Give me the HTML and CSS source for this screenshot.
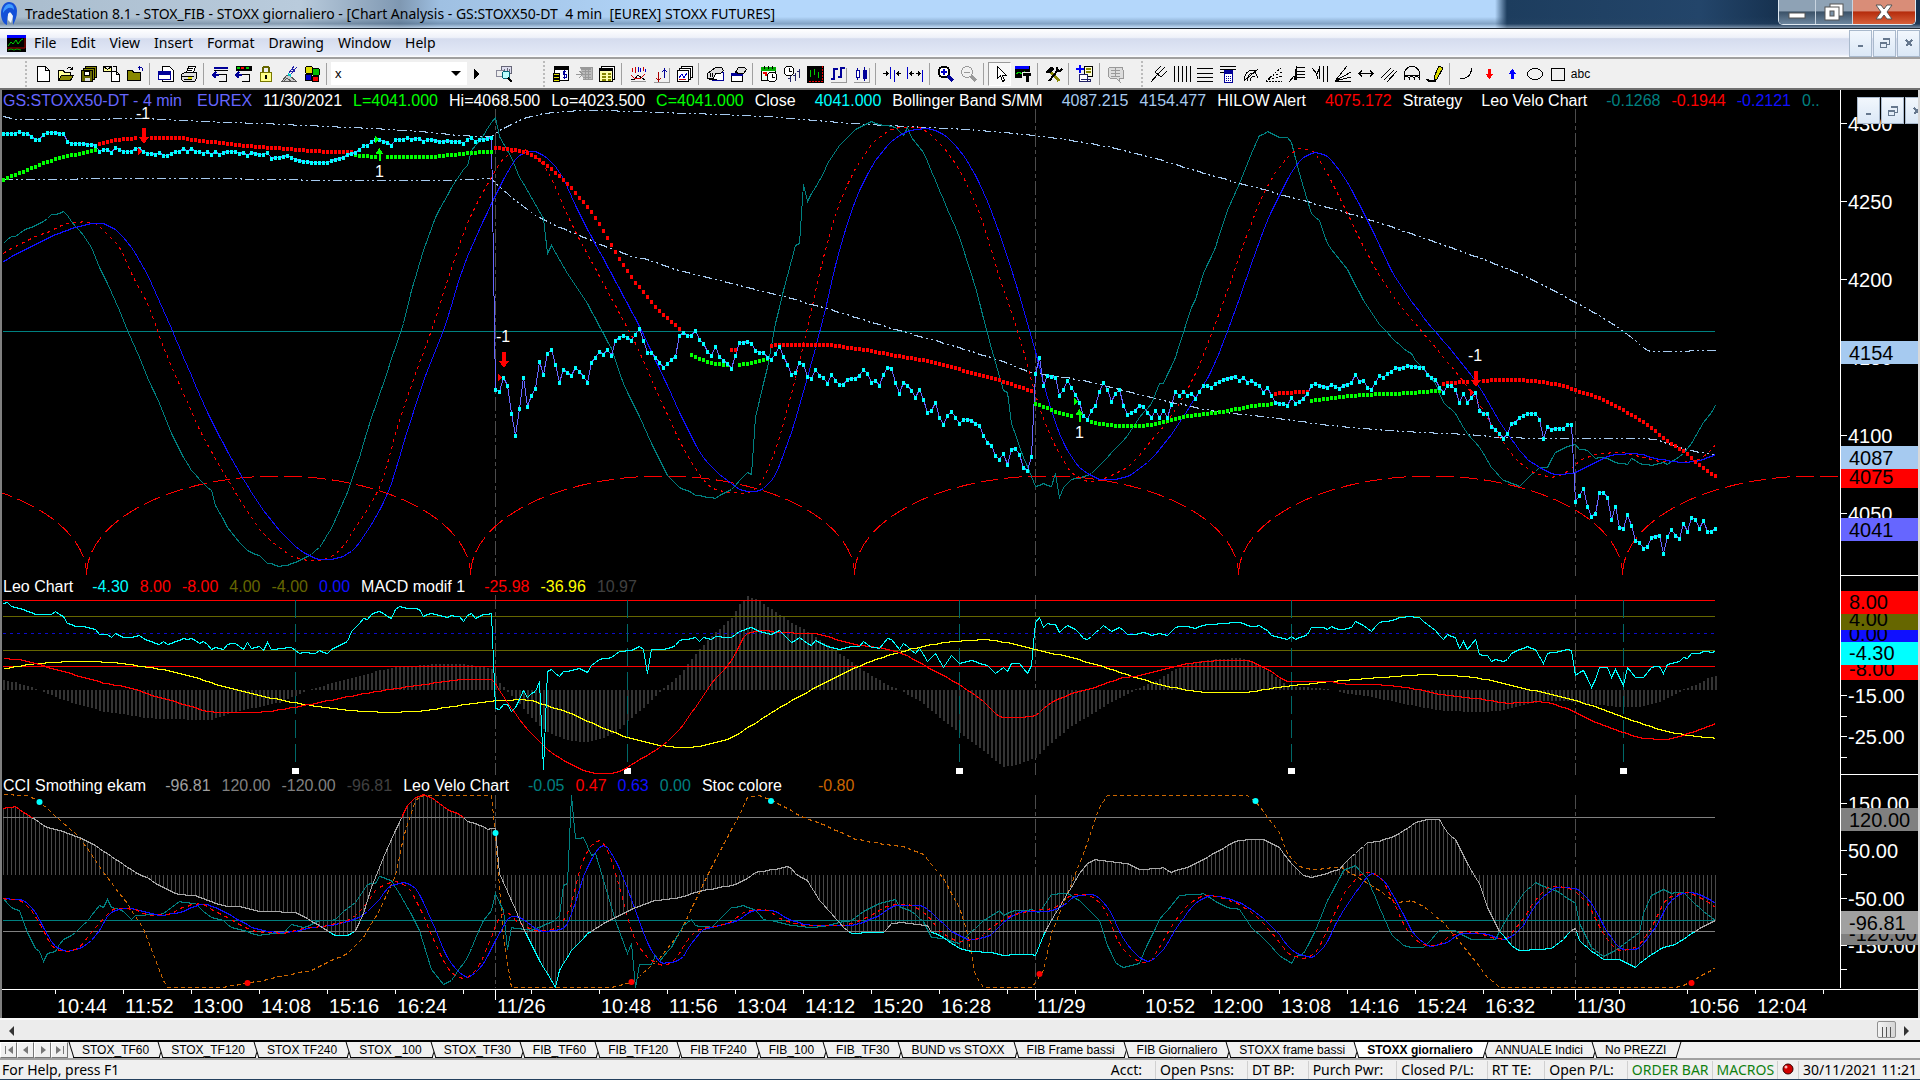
FILE: index.html
```
<!DOCTYPE html>
<html lang="en">
<head>
    <meta charset="utf-8">
    <title>TradeStation 8.1 - STOX_FIB - STOXX giornaliero</title>
    <link rel="stylesheet" href="styles.css">
</head>
<body>
<header class="titlebar">
    <svg class="logo" viewBox="0 0 18 26"><path d="M1 13C1 6 4 1 9 1c5 0 8 4 8 9 0 6-2 10-4 14 0-6 0-12-3-12-2 0-3 3-3 12C4 23 1 19 1 13z" fill="#1450d8"/><path d="M3 12C3 7 6 3 9 3c4 0 5 3 5 6-3-4-8-2-11 3z" fill="#3f9bff"/><path d="M8 13l2-2 3 4-2 7-3-3z" fill="#eef4ff"/></svg>
    <h1>TradeStation 8.1 - STOX_FIB - STOXX giornaliero - [Chart Analysis - GS:STOXX50-DT&nbsp; 4 min&nbsp; [EUREX] STOXX FUTURES]</h1>
    <div class="win-buttons">
        <button type="button" class="win-min" aria-label="Minimize"><svg width="20" height="16"><rect x="2" y="9" width="16" height="5" fill="#fff" stroke="#555"/></svg></button>
        <button type="button" class="win-max" aria-label="Restore"><svg width="22" height="18" fill="#fff" stroke="#555"><rect x="7" y="1" width="13" height="12"/><rect x="2" y="4" width="14" height="13"/><rect x="7" y="8" width="4" height="5" fill="#7c93a8"/></svg></button>
        <button type="button" class="win-close" aria-label="Close"><svg width="22" height="18"><path d="M3 2h5l3 4 3-4h5l-5 7 5 7h-5l-3-4-3 4H3l5-7z" fill="#fff" stroke="#555"/></svg></button>
    </div>
</header>

<nav class="menubar">
    <svg class="doc-icon" width="19" height="17"><path d="M0 0h19v17H0z" fill="#000"/><path d="M0 1.500h19" stroke="#00f" stroke-width="3"/><path d="M1 11l3-4 2 2 3-4 2 4 3-4 2-1" stroke="#0c0" fill="none"/><path d="M18 3v10H0" stroke="#a00" fill="none"/><path d="M1 15l3-1 3 1 3-1 4 1" stroke="#0a0" fill="none"/></svg>
    <button type="button">File</button>
    <button type="button">Edit</button>
    <button type="button">View</button>
    <button type="button">Insert</button>
    <button type="button">Format</button>
    <button type="button">Drawing</button>
    <button type="button">Window</button>
    <button type="button">Help</button>
    <div class="mdi">
        <button type="button" aria-label="Minimize chart"><svg width="14" height="14"><path d="M4 10h5" stroke-width="2"/></svg></button>
        <button type="button" aria-label="Restore chart"><svg width="14" height="14"><path d="M5 4V2h6v6H9M5 3h6M2 6h6v5H2zM2 7h6"/></svg></button>
        <button type="button" aria-label="Close chart"><svg width="14" height="14"><path d="M4 4l6 6M10 4l-6 6" stroke-width="2"/></svg></button>
    </div>
</nav>

<div class="toolbar">
    <i class="grip"></i>
    <button type="button" aria-label="New"><svg viewBox="0 0 18 18"><path d="M3.500 1.500h8l4 4v11h-12zM11.500 1.500v4h4" fill="#fff"/></svg></button>
    <button type="button" aria-label="Open"><svg viewBox="0 0 18 18"><path d="M1.500 15.500v-10h5l1 2h6v3" fill="#ff9"/><path d="M1.500 15.500l3-5h12l-3 5z" fill="#880"/><path d="M9.500 4.500c2-3 4-3 6 0M15.500 1.500v3h-3"/></svg></button>
    <button type="button" aria-label="Save all"><svg viewBox="0 0 18 18"><path d="M5.500 1.500h11v11h-11z" fill="#880"/><path d="M3.500 3.500h11v11h-11z" fill="#880"/><path d="M1.500 5.500h11v11h-11z" fill="#660"/><path d="M4.500 6.500h5v4h-5z" fill="#fff"/><path d="M5 13h5v3H5z" fill="#ddd" stroke="none"/></svg></button>
    <button type="button" aria-label="Page from template"><svg viewBox="0 0 18 18"><path d="M.500 1.500h8v5h-8zM.500 1.500l4 3 4-3" fill="#ff9"/><path d="M8.500 6.500h5l3 3v7h-8zM13.500 6.500v3h3" fill="#fff"/><path d="M10 1.500h3v4"/></svg></button>
    <button type="button" aria-label="Close folder"><svg viewBox="0 0 18 18"><path d="M1.500 15.500v-10h5l1 2h7v8z" fill="#880"/><path d="M17 6c0-3-1-4-4-4M13 .500v4M12 2h4" stroke="#009"/></svg></button>
    <i class="sep"></i>
    <button type="button" aria-label="Page setup"><svg viewBox="0 0 18 18"><path d="M5.500 1.500h7l4 4v11h-11z" fill="#fff"/><path d="M1.500 6.500h12v8h-12z" fill="#fff" stroke="#009"/><path d="M1 8h13" stroke="#009" stroke-width="3"/></svg></button>
    <button type="button" aria-label="Print"><svg viewBox="0 0 18 18"><path d="M6.500 7.500l2-6h7l-2 6" fill="#fff"/><path d="M8 3.500h5M7 5.500h5"/><path d="M1.500 9.500l3-2h12v6l-2 3h-11l-2-2z" fill="#ddd"/><path d="M1 11.500h13M4 14.500h8"/><path d="M8 13h4" stroke="#dd0" stroke-width="2"/></svg></button>
    <i class="sep"></i>
    <button type="button" aria-label="Insert window"><svg viewBox="0 0 18 18"><path d="M3 2.500h14" stroke="#009" stroke-width="2"/><path d="M3 5.500h14M7.500 9.500h8v7h-8" /><path d="M1 10h7M5 7l-3 3 3 3" stroke="#009" stroke-width="2"/></svg></button>
    <button type="button" aria-label="Insert bar"><svg viewBox="0 0 18 18"><path d="M2 1h15v4H2z" fill="#000"/><path d="M3 3h3" stroke="#0c0" stroke-width="2"/><path d="M7 3h3" stroke="#f00" stroke-width="2"/><path d="M12 3h3" stroke="#0c0" stroke-width="2"/><path d="M7.500 9.500h8v7h-8"/><path d="M1 10h7M5 7l-3 3 3 3" stroke="#009" stroke-width="2"/></svg></button>
    <button type="button" aria-label="Lock"><svg viewBox="0 0 18 18"><path d="M6 9V4c0-3 6-3 6 0v5" stroke="#660" stroke-width="2"/><path d="M3.500 7.500h11v9h-11z" fill="#ff8" stroke="#770"/><path d="M9 10v4" stroke-width="2"/></svg></button>
    <button type="button" aria-label="Satellite"><svg viewBox="0 0 18 18"><path d="M2 16l5-6 3 1 6 5zM4 16l3-3 4 3" fill="#ccc" stroke="#555"/><path d="M8 9l3 2" stroke="#0cc" stroke-width="2"/><path d="M9 8l5-7M11 9l6-7M12 4l3 1M11 6l4 1" stroke="#22a"/></svg></button>
    <button type="button" aria-label="Blocks"><svg viewBox="0 0 18 18"><circle cx="6" cy="5" r="4" fill="#dd0"/><circle cx="13" cy="7" r="4" fill="#0b0"/><path d="M2.500 9.500h6v6h-6z" fill="#00c"/><path d="M9.500 11.500h6v5h-6z" fill="#e00"/></svg></button>
    <i class="sep"></i>
    <label class="symbol"><select aria-label="Symbol"><option>x</option></select></label>
    <button type="button" class="go" aria-label="Go"><svg viewBox="0 0 18 18"><path d="M7 4l5 5-5 5z" fill="#000"/></svg></button>
    <button type="button" class="lookup" aria-label="Symbol lookup"><svg viewBox="0 0 18 18"><path d="M6.500 1.500h10v7h-10z" fill="#dde" stroke="#667"/><path d="M1.500 5.500h7v6h-7z" fill="#eee" stroke="#889"/><path d="M9 4v4M12 3v5M14 4v4" stroke="#667"/><circle cx="11" cy="10" r="4" fill="#bff" stroke="#067"/><path d="M13 13l4 4" stroke-width="2"/></svg></button>
    <i class="grip"></i>
    <button type="button" aria-label="Order bar"><svg viewBox="0 0 18 18"><path d="M2.500 1.500h14v14h-14z" fill="#fff"/><path d="M2 3h15" stroke-width="3"/><path d="M1.500 8.500h6v2h-6zM1.500 11.500h6v2h-6zM1.500 14.500h6v2h-6z" fill="#dd0"/><path d="M14 6h-3v3h3v3h-3M12.500 5v9" stroke="#009"/></svg></button>
    <button type="button" disabled aria-label="Position list"><svg viewBox="0 0 18 18" class="dim"><path d="M5 2h12v12H8" fill="#bbb"/><path d="M1 9h7M4 6l4 3-4 4M7 6h9M8 9h8M8 12h8M10 5v9M13 5v9"/><path d="M6 3h10" stroke-width="3"/></svg></button>
    <button type="button" aria-label="Table"><svg viewBox="0 0 18 18"><path d="M3.500 1.500h13v13h-13z" fill="#fff"/><path d="M1.500 3.500h13v13h-13z" fill="#ffa"/><path d="M1 4.500h14" stroke-width="2"/><path d="M4 8.500h4M10 8.500h3M4 11.500h4M10 11.500h3M4 14.500h4M10 14.500h3" stroke="#880" stroke-width="2"/></svg></button>
    <i class="sep"></i>
    <button type="button" aria-label="Indicator"><svg viewBox="0 0 18 18"><path d="M3 3v4M6 2v6M14 2v4" stroke="#c00"/><path d="M9 2v5M11 3v4M16 4v3" stroke="#00c"/><path d="M2 15l4-1 3-4 4 3 3 2"/><path d="M2 10l3 3 4 1 3-1 4-4" stroke="#c00"/><path d="M17 16H2" stroke="#999"/></svg></button>
    <button type="button" aria-label="Signals"><svg viewBox="0 0 18 18"><path d="M6.500 7v9M4.500 13l2 3 2-3" stroke="#a00"/><path d="M12.500 13V4M10.500 7l2-3 2 3" stroke="#009"/><path d="M17.500 3v14H2" stroke="#999"/></svg></button>
    <button type="button" aria-label="Chart stack"><svg viewBox="0 0 18 18"><path d="M6.500 1.500h11v11h-11z" fill="#fff"/><path d="M4.500 3.500h11v11h-11z" fill="#fff"/><path d="M2.500 5.500h11v11h-11z" fill="#fff"/><path d="M4 13l3-4 2 4 3-5" stroke="#00c"/><path d="M4 15l4-1 3 1" stroke="#c00"/></svg></button>
    <i class="sep"></i>
    <button type="button" aria-label="Format object"><svg viewBox="0 0 18 18"><path d="M6.500 7.500h11v8h-11z" fill="#fff" stroke="#009"/><path d="M1.500 8.500l8-6h6l2 3-3 3h-5l-2 5h-6z" fill="#ddd"/><path d="M4 8v4M6 8v4M3 14h8"/></svg></button>
    <button type="button" aria-label="Format window"><svg viewBox="0 0 18 18"><path d="M2.500 8.500h11v8h-11z" fill="#fff"/><path d="M2 9.500h12" stroke="#009" stroke-width="3"/><path d="M6.500 7.500l3-5h6l2 2-3 4h-4z" fill="#ddd"/></svg></button>
    <i class="sep"></i>
    <button type="button" aria-label="Session"><svg viewBox="0 0 18 18"><path d="M1.500 3.500h14v12h-14z" fill="#efe"/><path d="M1 4h15" stroke="#0a0" stroke-width="4"/><path d="M4 1v3M8 1v3M12 1v3"/><circle cx="12" cy="12" r="5" fill="#fff"/><path d="M12 9v3h3"/><path d="M3 8h3v3" stroke="#e00" stroke-width="2"/></svg></button>
    <button type="button" aria-label="Interval"><svg viewBox="0 0 18 18"><circle cx="6" cy="6" r="5" fill="#fff"/><path d="M6 3v3h3"/><path d="M7.500 11v6M12.500 8v8M16.500 4v9M5 13h3M10 10h3M14 6h3" stroke="#226"/></svg></button>
    <button type="button" aria-label="Chart colors"><svg viewBox="0 0 18 18"><path d="M1 1h16v16H1z" fill="#000"/><path d="M4.500 5v7M8.500 4v6M12.500 7v6" stroke="#0c0"/><path d="M3 16.500h14M16.500 1v15" stroke="#e00" stroke-dasharray="2 1"/></svg></button>
    <button type="button" aria-label="Bar style"><svg viewBox="0 0 18 18"><path d="M5 3v12M12 2v11" stroke="#009" stroke-width="2"/><path d="M2 14h3M5 4h4M9 12h3M12 3h4" stroke="#009" stroke-width="2"/><path d="M17.500 3v14H2" stroke="#999"/></svg></button>
    <button type="button" aria-label="Candle style"><svg viewBox="0 0 18 18"><path d="M5.500 3v12M12.500 2v14" stroke="#009"/><path d="M4 5h3v7H4z" fill="#fff" stroke="#009"/><path d="M11 5h3v8h-3z" fill="#009" stroke="#009"/><path d="M17.500 3v14H2" stroke="#999"/></svg></button>
    <i class="sep"></i>
    <button type="button" aria-label="Decrease spacing"><svg viewBox="0 0 18 18"><path d="M7.500 2v12M11.500 5v12" stroke="#00c"/><path d="M0 8.500h5M3 6.500l2 2-2 2M18 8.500h-4M16 6.500l-2 2 2 2"/></svg></button>
    <button type="button" aria-label="Increase spacing"><svg viewBox="0 0 18 18"><path d="M1.500 2v12M16.500 5v12" stroke="#00c"/><path d="M4 8.500h4M6 6.500l-2 2 2 2M14 8.500h-4M12 6.500l2 2-2 2"/></svg></button>
    <i class="sep"></i>
    <button type="button" aria-label="Zoom in"><svg viewBox="0 0 18 18"><circle cx="7" cy="7" r="5.500" fill="#fff" stroke-width="2"/><path d="M4 7h6M7 4v6" stroke="#00c" stroke-width="2"/><path d="M11 11l5 5" stroke="#009" stroke-width="3"/></svg></button>
    <button type="button" disabled aria-label="Zoom out"><svg viewBox="0 0 18 18" class="dim"><circle cx="7" cy="7" r="5.500"/><path d="M4 7h6"/><path d="M11 11l5 5" stroke-width="3"/></svg></button>
    <i class="sep"></i>
    <button type="button" class="pressed" aria-label="Pointer"><svg viewBox="0 0 18 18"><path d="M6.500 1.500v12l3-3 2 6 2-1-2-5h4z" fill="#fff"/></svg></button>
    <button type="button" aria-label="Tracking tip"><svg viewBox="0 0 18 18"><path d="M1 1h14v11H1z" fill="#000"/><path d="M1 2h14" stroke="#00f" stroke-width="3"/><path d="M2 9l3-2 3 2 3-3" stroke="#0c0"/><path d="M8 7h10v11H8z" fill="#f0f0f0" stroke="none"/><path d="M9 9.500h8M13 9v8" stroke-width="3"/></svg></button>
    <i class="sep"></i>
    <button type="button" aria-label="Customize"><svg viewBox="0 0 18 18"><path d="M4 5l10 11" stroke="#880" stroke-width="3"/><path d="M13 5L4 16" stroke-width="2"/><path d="M1 7l5-5 3 2-4 4z" fill="#000"/><path d="M12 2v3l3 1 2-2" stroke-width="2"/></svg></button>
    <i class="sep"></i>
    <button type="button" aria-label="Add window"><svg viewBox="0 0 18 18"><path d="M8.500 1.500h8v10h-8z" fill="#ffd"/><path d="M10 4h5M10 7h5" stroke="#880" stroke-width="2"/><path d="M3.500 9.500h8v7h-8z" fill="#fff" stroke="#226"/><path d="M5 14h9v2H5" stroke="#226"/><path d="M0 4h8M4 0v8" stroke="#00f" stroke-width="2"/></svg></button>
    <i class="sep"></i>
    <button type="button" disabled aria-label="Comment"><svg viewBox="0 0 18 18" class="dim"><path d="M3 2h12l1 3v8h-4l1 4-4-4H3L1 11V4z" fill="#ddd"/><path d="M4 5h9M4 8h9M4 11h9M8 3v9"/></svg></button>
    <i class="grip wide"></i>
    <button type="button" aria-label="Andrew's pitchfork"><svg viewBox="0 0 18 18"><path d="M1 17l7-8M5 7l6 5M5 7l6-6M8 9l7-7M11 12l6-6"/></svg></button>
    <button type="button" aria-label="Time cycles"><svg viewBox="0 0 18 18"><path d="M1.500 1v16M5.500 1v16M9.500 1v16M13.500 1v16M17.500 1v16"/></svg></button>
    <button type="button" aria-label="Fibonacci lines"><svg viewBox="0 0 18 18"><path d="M1 3.500h16M1 8.500h16M1 12.500h16M1 16.500h16"/></svg></button>
    <button type="button" aria-label="Calculator"><svg viewBox="0 0 18 18"><path d="M1 1.500h16M1 4.500h16M1 7.500h4"/><path d="M5.500 5.500h8v12h-8z" fill="#fff" stroke="#009"/><path d="M6 7h7" stroke="#009" stroke-width="3"/><path d="M7 11h1M9 11h1M11 11h1M7 13h1M9 13h1M11 13h1M7 15h1M9 15h1M11 15h1" stroke="#009"/></svg></button>
    <button type="button" aria-label="Speed arcs"><svg viewBox="0 0 18 18"><path d="M2 16c0-7 4-11 10-11M5 16c0-5 3-8 7-8M8 16c0-3 2-5 5-5M2 16L16 4M12 5l4 8"/></svg></button>
    <button type="button" aria-label="Fan lines"><svg viewBox="0 0 18 18"><path d="M1 16.500h16M1 16L17 2" stroke-dasharray="2 1"/><path d="M4 13l13-6M3 15l14-4" stroke-dasharray="2 2"/></svg></button>
    <button type="button" aria-label="Price extension"><svg viewBox="0 0 18 18"><path d="M1 17l5-6 1 4 1-11M8.500 1v14M9 2h8M9 6h8M9 9h8M9 12h8"/></svg></button>
    <button type="button" aria-label="Time extension"><svg viewBox="0 0 18 18"><path d="M1 3l5 6 2-5M8.500 1v13M12.500 1v16M16.500 1v16M5 8l2 6"/></svg></button>
    <button type="button" aria-label="Gann fan"><svg viewBox="0 0 18 18"><path d="M1 16.500h16M1 16L13 1M1 16L17 7M1 16l16-4"/></svg></button>
    <button type="button" aria-label="Horizontal line"><svg viewBox="0 0 18 18"><path d="M2 8.500h14M5 5.500l-3 3 3 3M13 5.500l3 3-3 3"/></svg></button>
    <button type="button" aria-label="Channel"><svg viewBox="0 0 18 18"><path d="M1 13L11 3M4 15L14 5M7 17L17 6"/></svg></button>
    <button type="button" aria-label="Arcs"><svg viewBox="0 0 18 18"><path d="M1.500 15V9c0-10 15-10 15 0v6M1.500 15c0-5 4-5 5 0 0-5 4-5 5 0 0-5 4-5 5 0M2 10h15"/></svg></button>
    <button type="button" aria-label="Pencil"><svg viewBox="0 0 18 18"><path d="M8 12l5-11 4 2-6 11-3 2z" fill="#dd0"/><path d="M1 14c2 3 5 3 9 2" stroke-width="2"/></svg></button>
    <i class="sep"></i>
    <button type="button" aria-label="Arc"><svg viewBox="0 0 18 18"><path d="M3 14c7 0 11-4 12-11"/></svg></button>
    <button type="button" aria-label="Down arrow"><svg viewBox="0 0 18 18"><path d="M8 4h3v5h2l-3 5h-1l-3-5h2z" fill="#f00" stroke="none"/></svg></button>
    <button type="button" aria-label="Up arrow"><svg viewBox="0 0 18 18"><path d="M8 14h3V9h2l-3-5h-1L6 9h2z" fill="#00f" stroke="none"/></svg></button>
    <button type="button" aria-label="Ellipse"><svg viewBox="0 0 18 18"><ellipse cx="9" cy="9" rx="7.500" ry="5.500"/></svg></button>
    <button type="button" aria-label="Rectangle"><svg viewBox="0 0 18 18"><path d="M2.500 3.500h13v12h-13z"/></svg></button>
    <button type="button" class="abc">abc</button>
</div>

<main class="chart">
    <section class="pane">
        <p class="legend">
            <span class="c-data">GS:STOXX50-DT - 4 min</span> <span class="c-data pre">EUREX</span> <span>11/30/2021</span> <span class="c-lime">L=4041.000</span> <span>Hi=4068.500</span> <span>Lo=4023.500</span> <span class="c-lime">C=4041.000</span>
            <span class="name">Close</span> <span class="c-cyan">4041.000</span>
            <span class="name">Bollinger Band S/MM</span> <span class="c-band">4087.215</span> <span class="c-band">4154.477</span>
            <span class="name">HILOW Alert</span> <span class="c-red">4075.172</span>
            <span class="name">Strategy</span>
            <span class="name">Leo Velo Chart</span> <span class="c-teal">-0.1268</span> <span class="c-red">-0.1944</span> <span class="c-blue">-0.2121</span> <span class="c-teal">0..</span>
        </p>
        <svg class="plot" id="price"></svg>
    </section>
    <svg class="scale" id="priceScale"></svg>

    <section class="pane">
        <p class="legend">
            <span class="name">Leo Chart</span> <span class="c-cyan">-4.30</span> <span class="c-red">8.00</span> <span class="c-red">-8.00</span> <span class="c-olive">4.00</span> <span class="c-olive">-4.00</span> <span class="c-blue">0.00</span>
            <span class="name">MACD modif 1</span> <span class="c-red">-25.98</span> <span class="c-yellow">-36.96</span> <span class="c-dark">10.97</span>
        </p>
        <svg class="plot" id="macd"></svg>
    </section>
    <svg class="scale" id="macdScale"></svg>

    <section class="pane">
        <p class="legend">
            <span class="name">CCI Smothing ekam</span> <span class="c-silver">-96.81</span> <span class="c-gray">120.00</span> <span class="c-gray">-120.00</span> <span class="c-dark">-96.81</span>
            <span class="name">Leo Velo Chart</span> <span class="c-teal">-0.05</span> <span class="c-red">0.47</span> <span class="c-blue">0.63</span> <span class="c-teal">0.00</span>
            <span class="name far">Stoc colore</span> <span class="c-orange">-0.80</span>
        </p>
        <svg class="plot" id="cci"></svg>
    </section>
    <svg class="scale" id="cciScale"></svg>

    <svg class="times" id="times"></svg>

    <div class="mdi float">
        <button type="button" aria-label="Minimize window"><svg width="14" height="14"><path d="M4 10h5" stroke-width="2"/></svg></button>
        <button type="button" aria-label="Restore window"><svg width="14" height="14"><path d="M5 4V2h6v6H9M5 3h6M2 6h6v5H2zM2 7h6"/></svg></button>
        <button type="button" aria-label="Close window"><svg width="14" height="14"><path d="M4 4l6 6M10 4l-6 6" stroke-width="2"/></svg></button>
    </div>
</main>

<div class="scroll">
    <button type="button" aria-label="Scroll left"><svg width="8" height="10"><path d="M6 0v10L1 5z" fill="#333"/></svg></button>
    <button type="button" class="thumb" aria-label="Scroll thumb"><svg width="12" height="10"><path d="M1.500 0v10M5.500 0v10M9.500 0v10" stroke="#555"/></svg></button>
    <button type="button" aria-label="Scroll right"><svg width="8" height="10"><path d="M2 0v10l5-5z" fill="#333"/></svg></button>
</div>

<div class="tabs">
    <div class="tab-nav">
        <button type="button" aria-label="First"><svg width="12" height="12"><path d="M10 2v8L5 6z"/><path d="M2 2h1v8H2z"/></svg></button>
        <button type="button" aria-label="Previous"><svg width="12" height="12"><path d="M8 2v8L3 6z"/></svg></button>
        <button type="button" aria-label="Next"><svg width="12" height="12"><path d="M4 2v8l5-4z"/></svg></button>
        <button type="button" aria-label="Last"><svg width="12" height="12"><path d="M2 2v8l5-4z"/><path d="M9 2h1v8H9z"/></svg></button>
    </div>
    <button type="button" class="tab">STOX_TF60</button>
    <button type="button" class="tab">STOX_TF120</button>
    <button type="button" class="tab">STOX TF240</button>
    <button type="button" class="tab">STOX _100</button>
    <button type="button" class="tab">STOX_TF30</button>
    <button type="button" class="tab">FIB_TF60</button>
    <button type="button" class="tab">FIB_TF120</button>
    <button type="button" class="tab">FIB TF240</button>
    <button type="button" class="tab">FIB_100</button>
    <button type="button" class="tab">FIB_TF30</button>
    <button type="button" class="tab">BUND vs STOXX</button>
    <button type="button" class="tab">FIB Frame bassi</button>
    <button type="button" class="tab">FIB Giornaliero</button>
    <button type="button" class="tab">STOXX frame bassi</button>
    <button type="button" class="tab active">STOXX giornaliero</button>
    <button type="button" class="tab">ANNUALE Indici</button>
    <button type="button" class="tab">No PREZZI</button>
</div>

<footer class="status">
    <span class="help">For Help, press F1</span>
    <span>Acct:</span>
    <span>Open Psns:</span>
    <span>DT BP:</span>
    <span>Purch Pwr:</span>
    <span>Closed P/L:</span>
    <span>RT TE:</span>
    <span>Open P/L:</span>
    <span class="on">ORDER BAR</span>
    <span class="on">MACROS</span>
    <span class="led"><svg width="12" height="12"><circle cx="6" cy="6" r="5" fill="#d00000" stroke="#300"/><circle cx="4" cy="4" r="1.500" fill="#fbb"/></svg></span>
    <span class="clock">30/11/2021 11:21</span>
</footer>
<script src="script.js"></script>
</body>
</html>
```
FILE: styles.css
```
* { box-sizing: border-box; }

body {
    margin: 0;
    height: 100vh;
    display: flex;
    flex-direction: column;
    overflow: hidden;
    background: #f0f0f0;
    border-bottom: 1px solid #24405e;
    font-family: "Noto Sans", "Open Sans", sans-serif;
    font-size: 14px;
    color: #000;
}

button {
    margin: 0;
    padding: 0;
    border: 0;
    background: none;
    font: inherit;
    color: inherit;
}

/* title bar */
.titlebar {
    flex: none;
    height: 29px;
    display: flex;
    align-items: center;
    border-bottom: 1px solid #1c2733;
    background:
        linear-gradient(180deg, transparent 60%, rgba(40, 70, 100, .35) 85%, rgba(220, 235, 250, .5)),
        linear-gradient(90deg, #a9bccd 0, #b9cbdc 300px, #7f98b2 400px, #9fc0e2 440px, #b4d7fb 700px, #b4d7fb 1495px, #1d3d5e 1507px, #23456a 1700px, #16314f 1780px);
}
.logo { width: 18px; height: 26px; }
.titlebar h1 {
    flex: 1;
    margin: 0 0 0 7px;
    font-size: 14px;
    font-weight: 400;
    line-height: 28px;
    white-space: nowrap;
}
.win-buttons {
    align-self: flex-start;
    display: flex;
    height: 25px;
    margin-right: 4px;
    border: 1px solid #dfe9f2;
    border-top: 0;
    border-radius: 0 0 5px 5px;
    overflow: hidden;
}
.win-buttons button {
    width: 37px;
    display: flex;
    align-items: center;
    justify-content: center;
    border-right: 1px solid #c8d4e0;
    background: linear-gradient(#8ea2b5 45%, #3b5268 50%, #6d869e);
}
.win-buttons .win-close {
    width: 62px;
    border-right: 0;
    background: linear-gradient(#d98d78 45%, #b52c0c 50%, #d8603a);
}

/* menu */
.menubar {
    flex: none;
    height: 30px;
    display: flex;
    align-items: center;
    padding-left: 7px;
    border-bottom: 2px solid #a0a0a0;
    background: linear-gradient(#fff, #eef1f9 30%, #d5dcee 35%, #e3e9f7 90%, #fff);
}
.menubar > button { padding: 0 7px; line-height: 26px; }
.doc-icon { margin-right: 1px; }
.mdi { display: flex; height: 27px; margin-left: auto; gap: 1px; }
.mdi button {
    width: 23px;
    display: flex;
    align-items: center;
    justify-content: center;
    border: 1px solid #a9b9cc;
    background: linear-gradient(#f2f7fd, #dbe8f6);
}
.mdi svg { fill: none; stroke: #66788e; shape-rendering: crispEdges; }
.mdi.float { position: absolute; top: 7px; right: -10px; }

/* toolbar */
.toolbar {
    flex: none;
    height: 31px;
    display: flex;
    align-items: center;
    border-bottom: 2px solid #707070;
    overflow: hidden;
}
.toolbar button {
    flex: none;
    width: 23px;
    height: 24px;
    display: flex;
    align-items: center;
    justify-content: center;
}
.toolbar svg {
    width: 18px;
    height: 18px;
    fill: none;
    stroke: #000;
    shape-rendering: crispEdges;
}
.toolbar svg.dim { stroke: #999; }
.toolbar .pressed { border: 1px solid; border-color: #999 #fff #fff #999; background: #f8f8f8; }
.toolbar .go { width: 18px; }
.toolbar .lookup { margin: 0 28px 0 7px; }
.toolbar .abc { font: 12px "Liberation Sans", sans-serif; }
.sep { flex: none; width: 1px; height: 22px; margin: 0 4px 0 3px; background: #a0a0a0; }
.grip { flex: none; width: 0; height: 26px; margin: 0 4px 0 0; border-left: 2px dotted #bbb; }
.grip:first-child { margin-left: 25px; }
.grip.wide { margin-left: 14px; }
.symbol { position: relative; }
.symbol select {
    display: block;
    width: 136px;
    height: 23px;
    margin: 0;
    padding: 0 0 0 4px;
    border: 0;
    border-radius: 0;
    appearance: none;
    background: #fff;
    font: 13px "Liberation Sans", sans-serif;
}
.symbol::after {
    content: "";
    position: absolute;
    right: 6px;
    top: 9px;
    border: 5px solid transparent;
    border-top-color: #000;
    border-bottom: 0;
    pointer-events: none;
}

/* chart */
.chart {
    position: relative;
    flex: 1;
    min-height: 0;
    display: grid;
    grid-template-columns: 1fr 78px;
    grid-template-rows: 1fr 199px 213px 30px;
    border-left: 2px solid #808080;
    border-right: 2px solid #d8d8d8;
    background: #000;
    color: #fff;
    font-family: "Liberation Sans", Arial, sans-serif;
    overflow: hidden;
}
.pane { display: grid; min-width: 0; min-height: 0; }
.pane > * { grid-area: 1 / 1; }
.legend {
    display: flex;
    gap: 11px;
    margin: 0;
    padding-left: 1px;
    font-size: 16px;
    line-height: 21px;
    white-space: nowrap;
}
.legend .name { margin-right: 8px; }
.legend .far { margin-right: 25px; }
.legend .pre { margin-left: 4px; }
.plot, .scale, .times { display: block; width: 100%; height: 100%; min-height: 0; }
.times { grid-column: 1 / 3; }
.chart text { fill: #fff; font-size: 20px; }
.chart .mark { font-size: 16px; }
.chart .tag { fill: #000; }

.plot path, .plot line, .scale path, .times path { fill: none; shape-rendering: crispEdges; }

.c-data { color: #6666ff; }
.c-lime { color: #00ff00; }
.c-cyan { color: #00ffff; }
.c-band { color: #a6caf0; }
.c-red { color: #ff0000; }
.c-teal { color: #008080; }
.c-blue { color: #1010ff; }
.c-olive { color: #666600; }
.c-yellow { color: #ffff00; }
.c-dark { color: #404040; }
.c-silver { color: #a0a0a0; }
.c-gray { color: #808080; }
.c-orange { color: #cc6600; }

/* scroll bar */
.scroll {
    flex: none;
    height: 22px;
    display: flex;
    align-items: center;
    padding: 0 5px 2px 2px;
    background: #ececec;
    border-top: 2px solid #f8f8f8;
}
.scroll button { width: 19px; height: 17px; }
.scroll .thumb {
    margin-left: auto;
    border: 1px solid #909090;
    border-radius: 2px;
    background: linear-gradient(90deg, #f4f4f4, #d4d4d4);
}

/* workspace tabs */
.tabs {
    flex: none;
    height: 20px;
    display: flex;
    align-items: flex-start;
    border-top: 2px solid #000;
    border-bottom: 2px solid #a0a0a0;
    font: 12px "Liberation Sans", Arial, sans-serif;
}
.tab-nav { display: flex; margin-right: 3px; }
.tab-nav button {
    width: 17px;
    height: 16px;
    display: flex;
    align-items: center;
    justify-content: center;
    border: 1px solid;
    border-color: #fff #777 #777 #fff;
}
.tab-nav svg { fill: #777; }
.tab {
    position: relative;
    z-index: 0;
    height: 16px;
    padding: 0 11px;
    line-height: 15px;
    white-space: nowrap;
}
.tab::before, .tab::after {
    content: "";
    position: absolute;
    z-index: -1;
    top: 0;
    bottom: 0;
    width: 52%;
    background: #f0f0f0;
    border-bottom: 1px solid #000;
}
.tab::before { left: 0; transform: skewX(17deg); border-left: 1px solid #000; }
.tab::after { right: -2px; transform: skewX(-17deg); border-right: 1px solid #000; }
.tab.active { z-index: 1; font-weight: 700; }
.tab.active::before, .tab.active::after { background: #fff; }

/* status bar */
.status {
    flex: none;
    height: 19px;
    display: flex;
    align-items: center;
    line-height: 18px;
    white-space: nowrap;
    overflow: hidden;
}
.status span { padding: 0 13px 0 4px; border-left: 1px solid #d0d0d0; }
.status .help { flex: 1; border: 0; padding-left: 2px; }
.status .help + span { border: 0; }
.status .on { padding-right: 3px; color: #108010; }
.status .led { padding: 0 4px; }
.status .clock { padding-right: 3px; }
```
FILE: script.js
```
// bars are 4px apart, first one at x = 3.5
var BAR = 4, FIRST = 3.5;
// series are stored in three sections, 640px wide each
var SECTION = 640, UX = 2.45, UY = 3;

function bars(sections, start) {
    var map = {};
    sections.forEach(function (text, i) {
        text.trim().split(/\s+/).forEach(function (p) {
            if (!p) return;
            var v = p.split(',');
            var x = (i + (start || 0)) * SECTION + v[0] / UX;
            map[Math.round((x - FIRST) / BAR)] = v[1] / UY;
        });
    });
    return Object.keys(map).map(Number).sort(function (a, b) { return a - b; }).map(function (k) { return [k, map[k]]; });
}

// one value for every bar; smooth series get limited tangents so that they do not overshoot
function fill(pts, smooth) {
    var out = [], n = pts.length, d = [], m = [], i, k;
    for (i = 0; i < n - 1; i++) d[i] = (pts[i + 1][1] - pts[i][1]) / (pts[i + 1][0] - pts[i][0]);
    for (i = 0; i < n; i++) {
        if (i === 0) m[i] = d[0];
        else if (i === n - 1) m[i] = d[n - 2];
        else m[i] = d[i - 1] * d[i] <= 0 ? 0 : 2 * d[i - 1] * d[i] / (d[i - 1] + d[i]);
    }
    for (i = 0; i < n - 1; i++) {
        var h = pts[i + 1][0] - pts[i][0], a = pts[i][1], b = pts[i + 1][1];
        for (k = 0; k < h; k++) {
            var t = k / h, t2 = t * t, t3 = t2 * t;
            out.push([pts[i][0] + k, smooth
                ? (2 * t3 - 3 * t2 + 1) * a + (t3 - 2 * t2 + t) * h * m[i] + (3 * t2 - 2 * t3) * b + (t3 - t2) * h * m[i + 1]
                : a + (b - a) * t]);
        }
    }
    out.push(pts[n - 1]);
    return out;
}

function series(sections, top, smooth, start) {
    return fill(bars(sections, start), smooth).map(function (p) {
        return [FIRST + p[0] * BAR, Math.round(p[1] + top) + .5];
    });
}

function line(pts, color, dash, extra) {
    return '<path d="M' + pts.map(function (p) { return p.join(' '); }).join('L') + '" stroke="' + color + '"' +
        (dash ? ' stroke-dasharray="' + dash + '"' : '') + (extra || '') + '/>';
}
function dots(pts, color) {
    return pts.map(function (p) {
        return '<rect x="' + (p[0] - 1.5) + '" y="' + (p[1] - 1.5) + '" width="3" height="4" fill="' + color + '"/>';
    }).join('');
}
function hist(pts, base, width, color) {
    return '<path d="' + pts.map(function (p) { return 'M' + p[0] + ' ' + base + 'V' + p[1]; }).join('') +
        '" stroke="' + color + '" stroke-width="' + width + '"/>';
}
function hline(y, color, dash) { return line([[3, y], [1715, y]], color, dash); }
function text(x, y, s, cls) { return '<text x="' + x + '" y="' + y + '"' + (cls ? ' class="' + cls + '"' : '') + '>' + s + '</text>'; }
function down(x, y) { return '<path style="fill:#f00" d="M' + (x - 1.5) + ' ' + y + 'h4v9h3l-5 7l-5-7h3z"/>'; }
function up(x, y) { return '<path style="fill:#0f0" d="M' + (x - .5) + ' ' + (y + 13) + 'h2v-7h3l-4-6l-4 6h3z"/>'; }
function flag(x, y, c) { return '<path style="fill:' + c + '" d="M' + x + ' ' + (y - 3) + 'l4 3l-4 4z"/>'; }
var breaks = [495.5, 1035.5, 1575.5];
function sessions(y1, y2) {
    return breaks.map(function (x) { return line([[x, y1], [x, y2]], '#4c4c4c', '14 3 4 3'); }).join('');
}
// window coordinates -> svg
function put(id, x, y, body) {
    document.getElementById(id).innerHTML = '<g transform="translate(' + -x + ' ' + -y + ')">' + body + '</g>';
}

/* ---- price pane ---- */
var T = 100;
var close = series([
    '8,98 37,98 47,92 57,98 67,98 76,108 85,117 95,117 106,101 116,96 155,98 165,122 175,128 205,128 215,132 235,134 243,153 255,148 263,148 272,156 284,142 293,148 303,152 325,152 330,143 340,143 350,154 360,158 380,162 390,155 400,165 409,166 420,158 430,152 440,154 450,144 459,154 470,144 480,153 490,152 500,158 510,154 520,162 530,154 540,162 550,155 560,152 580,154 590,160 600,156 610,165 620,156 632,162 645,162 655,156 665,174 690,168 705,165 725,176 740,182 770,186 800,186 815,180 830,174 845,170 855,162 870,156 880,148 890,136 900,136 910,124 920,118 930,118 945,126 960,134 970,118 990,116 1000,112 1010,116 1025,113 1035,122 1045,118 1060,118 1075,122 1095,121 1110,124 1125,122 1135,130 1145,118 1155,112 1165,124 1175,118 1190,114 1205,111 1214,866 1223,872 1233,832 1243,855 1253,938 1262,1004 1272,924 1282,832 1292,917 1301,885 1312,863 1321,783 1331,822 1341,758 1351,746 1360,792 1370,846 1380,806 1390,815 1400,825 1409,800 1420,812 1430,828 1439,846 1449,786 1458,770 1468,752 1478,762 1488,748 1498,764 1508,720 1527,704 1547,720 1557,702 1567,684',
    '8,720 18,755 28,755 38,770 57,800 67,790 77,776 87,768 97,706 106,695 116,705 126,706 136,690 146,716 155,728 165,754 175,764 185,738 195,768 204,780 214,790 224,804 234,764 243,726 263,723 273,730 283,750 293,756 303,755 313,772 322,778 332,758 341,738 351,768 361,792 371,822 381,816 390,785 400,792 410,828 420,834 430,806 440,826 450,832 459,850 469,822 479,840 489,852 499,852 508,836 518,834 530,834 540,826 547,806 557,820 567,846 577,840 587,856 596,822 606,800 616,804 626,846 636,880 645,846 655,855 665,870 675,892 685,866 695,896 704,936 714,930 724,906 734,950 744,972 753,944 763,933 773,950 783,970 793,956 812,960 832,976 842,1004 852,1026 861,1034 871,1066 881,1076 890,1058 900,1092 910,1046 920,1044 930,1062 940,1100 949,1110 959,1067 968,819 979,770 989,856 998,826 1018,830 1028,886 1038,866 1047,840 1057,862 1067,882 1077,906 1087,945 1097,956 1106,930 1116,914 1126,873 1136,846 1146,866 1155,904 1165,880 1175,866 1185,914 1194,942 1204,936 1214,930 1224,914 1234,917 1244,936 1254,950 1263,930 1273,950 1283,930 1293,952 1302,912 1312,873 1322,886 1332,873 1341,885 1351,880 1361,894 1371,872 1380,854 1390,854 1400,862 1410,850 1430,838 1449,832 1459,827 1469,840 1479,832 1488,845 1498,840 1518,855 1528,876 1537,862 1547,886 1557,906 1567,908',
    '8,910 18,916 28,892 38,908 57,895 67,880 77,855 87,850 116,862 126,852 146,864 155,855 165,852 175,846 185,822 195,842 204,840 214,860 224,868 234,846 243,824 253,830 263,820 273,812 283,800 293,804 312,795 330,798 350,802 361,822 371,832 381,836 390,862 400,876 410,855 420,856 430,868 440,906 450,878 459,906 469,892 479,876 488,930 498,938 508,940 518,978 528,986 537,998 547,1014 557,998 567,968 577,966 587,950 606,938 626,940 636,956 645,1014 655,978 665,986 695,984 705,972 714,972 724,1204 734,1184 743,1164 753,1218 763,1248 773,1240 783,1176 793,1176 802,1190 812,1256 822,1218 832,1282 841,1284 851,1242 861,1276 871,1320 880,1326 890,1344 900,1338 910,1312 929,1304 939,1360 949,1308 959,1287 969,1304 979,1314 988,1268 998,1292 1008,1252 1018,1256 1028,1284 1037,1260 1047,1292 1057,1292 1066,1284'
], T);
var bandUp = series([
    '8,48 50,58 350,55 480,62 620,68 800,78 1000,90 1180,108 1205,107 1214,98 1240,78 1290,50 1340,38 1440,30 1560,33',
    '5,34 300,48 560,72 780,86 968,106 1120,132 1240,168 1400,225 1565,281',
    '200,352 400,434 480,468 600,525 724,606 800,660 860,710 908,752 1066,751'
], T, true);
var bandDown = series([
    '8,238 150,238 230,233 640,236 860,241 1060,241 1205,235 1214,248 1280,318 1330,358 1420,405 1500,445 1560,470',
    '5,475 100,510 300,573 440,618 600,676 760,735 880,780 968,818 1060,834 1160,862 1300,905 1400,930 1565,954',
    '120,974 300,993 470,1003 560,1012 900,1015 980,1040 1066,1066'
], T, true);
var velo = series([
    '8,428 30,408 40,408 60,390 108,364 130,342 145,340 155,332 165,346 180,364 205,404 225,440 245,500 265,550 290,630 310,690 330,745 345,770 360,830 390,910 420,1000 445,1070 470,1110 500,1150 519,1170 530,1215 555,1280 575,1312 605,1350 640,1366 655,1388 670,1390 686,1398 705,1394 730,1380 760,1362 785,1340 810,1285 855,1175 880,1070 910,950 940,850 960,775 972,740 985,670 1010,570 1040,450 1070,350 1110,262 1135,206 1147,194 1160,150 1180,104 1200,66 1214,52 1225,108 1250,170 1270,230 1300,290 1330,355 1341,460 1351,436 1390,520 1440,610 1500,745 1530,850 1565,948',
    '30,1030 70,1125 95,1162 115,1170 140,1184 185,1194 200,1178 225,1168 245,1140 265,1116 273,1122 285,950 310,800 330,670 350,570 370,480 382,434 390,428 400,252 411,302 425,280 445,220 460,190 490,135 525,88 545,76 565,64 590,72 625,80 645,106 656,80 665,110 695,155 735,270 780,410 820,560 855,700 890,870 900,876 912,970 940,1070 968,1158 985,1150 1008,1158 1018,1118 1028,1192 1040,1160 1055,1136 1075,1134 1110,1120 1150,1070 1195,1006 1220,950 1250,910 1273,848 1283,850 1310,770 1350,620 1362,596 1380,520 1410,440 1440,330 1470,250 1500,160 1518,104 1528,103 1538,94 1565,110',
    '18,112 28,126 45,220 60,260 80,340 95,360 120,430 165,508 205,600 240,672 270,710 300,745 322,760 330,780 352,803 380,850 400,905 430,940 460,1000 490,1040 520,1100 550,1140 585,1157 610,1135 640,1100 655,1100 675,1056 700,1038 724,1032 735,1046 753,1049 773,1074 790,1070 822,1086 850,1092 860,1074 885,1088 910,1096 940,1085 952,1092 990,1060 1010,1028 1035,966 1055,936 1066,914'
], T);
var veloRed = series([
    '8,458 60,425 120,395 170,370 200,364 230,370 265,402 290,440 320,520 360,610 400,740 450,880 500,1010 550,1115 600,1215 650,1300 690,1350 720,1372 770,1381 800,1374 830,1350 870,1280 930,1160 980,960 1020,820 1055,690 1095,540 1150,370 1200,230 1230,175 1260,150 1285,148 1330,195 1400,370 1480,550 1560,730',
    '50,890 100,1020 140,1105 180,1160 210,1176 250,1178 285,1166 320,1080 370,880 410,680 450,470 490,310 540,185 590,110 640,82 680,82 715,105 770,190 830,340 880,530 930,710 980,920 1030,1060 1070,1126 1110,1143 1150,1130 1190,1100 1250,1020 1300,945 1360,820 1400,700 1440,570 1490,400 1530,280',
    '0,200 25,160 50,145 75,150 105,200 145,290 210,460 270,580 330,670 400,770 460,860 500,930 540,1010 590,1085 630,1118 670,1130 700,1112 740,1075 780,1060 830,1056 880,1068 930,1082 980,1085 1020,1080 1045,1060 1066,1032'
], T, true);
var veloBlue = series([
    '8,482 60,450 150,398 200,374 240,368 275,380 310,425 350,500 400,630 450,770 520,960 590,1115 650,1230 700,1315 750,1362 790,1378 825,1375 860,1352 900,1290 950,1180 1000,990 1050,810 1088,690 1140,500 1200,310 1240,215 1275,165 1305,152 1335,165 1370,215 1420,340 1500,520 1560,655',
    '60,830 110,960 160,1070 210,1140 250,1170 285,1174 320,1140 360,1030 410,830 450,650 490,450 540,270 590,165 640,105 675,88 705,84 735,95 780,150 840,275 900,470 960,710 1010,930 1050,1050 1090,1110 1140,1138 1180,1132 1230,1095 1290,1018 1350,910 1400,810 1450,660 1500,490 1540,360',
    '0,285 30,215 60,172 85,157 110,162 150,210 210,360 280,530 350,650 420,750 465,825 500,880 560,1000 620,1085 680,1122 720,1115 770,1085 820,1062 870,1060 930,1076 990,1085 1030,1080 1066,1062'
], T, true);

// [sections, first section]
var hilowRed = [
    [['243,130 265,122 300,115 336,112'], 0],
    [['370,110 430,110 470,116 520,123 560,128 620,136 680,142 740,148 800,152 860,153'], 0],
    [['1214,140 1250,146 1290,156 1320,176 1350,205 1380,236 1410,276 1440,318 1470,370 1500,432 1530,492 1560,545', '8,572 38,617 67,652 97,684 106,695'], 0],
    [['224,746 234,746'], 1],
    [['322,734 350,731 450,731 500,738 560,748 620,762 680,776 740,792 800,812 860,830 910,850 963,870'], 1],
    [['1557,880', '8,875 67,874'], 1],
    [['400,848 430,845 460,843'], 2],
    [['498,840 560,836 620,840 680,852 724,868 780,892 840,928 900,972 950,1020 1000,1060 1030,1092 1066,1126'], 2]
];
var hilowGreen = [
    [['8,236 60,212 110,187 150,172 190,158 235,147'], 0],
    [['870,163 920,168'], 0],
    [['948,167 1060,167 1110,162 1160,156 1205,152'], 0],
    [['126,762 155,778 185,788 214,792'], 1],
    [['243,792 275,786 313,774'], 1],
    [['968,908 1000,922 1030,936 1062,946'], 1],
    [['1097,958 1130,968 1180,975 1230,974 1280,962 1330,948 1380,940 1440,930 1500,916 1550,910'], 1],
    [['77,900 130,892 200,882 300,877 390,869'], 2]
];

// cycle lines: half ellipses, 384px period
var cycles = '';
[-297.5, 86.5, 470.5, 854.5, 1238.5, 1622.5].forEach(function (x) {
    cycles += '<path stroke="#f00" stroke-dasharray="18 6" d="M' + x + ' 575A192 99 0 0 1 ' + (x + 384) + ' 575"/>';
});

put('price', 2, 90,
    '<clipPath id="arcs"><rect x="2" y="90" width="1837" height="490"/></clipPath>' +
    sessions(109, 576) +
    hline(331.5, '#008080') +
    '<g clip-path="url(#arcs)">' + cycles + '</g>' +
    line(bandUp, '#a6caf0', '9 3 2 3 2 3') + line(bandDown, '#a6caf0', '9 3 2 3 2 3') +
    line(velo, '#008080') + line(veloRed, '#f00', '3 4') + line(veloBlue, '#1010ff') +
    line(close, '#6666ff') +
    hilowRed.map(function (s) { return dots(series(s[0], T, true, s[1]), '#f00'); }).join('') +
    hilowGreen.map(function (s) { return dots(series(s[0], T, true, s[1]), '#0f0'); }).join('') +
    dots(close, '#0ff') +
    flag(138, 151, '#f00') + flag(498, 377, '#f00') + flag(1470, 392, '#f00') + flag(375, 139, '#0f0') + flag(1074, 401, '#0f0') +
    down(143.5, 128) + down(503.5, 352) + down(1475.5, 371) + up(379, 148) + up(1079, 409) +
    text(136, 119, '-1', 'mark') + text(496, 342, '-1', 'mark') + text(1468, 361, '-1', 'mark') +
    text(375, 177, '1', 'mark') + text(1075, 438, '1', 'mark')
);

/* ---- MACD pane ---- */
T = 570;
var macdHist = series([
    '8,328 40,334 60,342 100,356 120,368 160,388 200,405 250,422 300,430 350,440 400,445 520,446 560,430 620,412 680,395 724,374 750,358 780,347 830,330 880,315 930,298 980,287 1060,280 1140,279 1180,288 1205,294 1225,335 1245,362 1265,385 1290,430 1320,465 1350,490 1390,508 1430,514 1470,505 1510,485 1540,450 1560,430',
    '8,410 40,375 60,352 100,312 140,248 180,195 220,140 245,100 265,76 290,90 320,115 370,155 410,182 450,215 500,256 550,300 600,335 640,358 680,390 730,440 790,495 850,550 890,588 920,582 965,560 1000,525 1060,465 1110,430 1150,400 1190,368 1215,355 1260,330 1300,300 1350,275 1400,266 1470,261 1500,270 1540,300 1565,325',
    '20,345 60,348 100,351 140,357 160,366 220,378 280,393 340,408 400,420 500,423 550,418 600,402 650,390 700,390 760,400 830,408 880,407 930,393 970,370 990,354 1020,342 1050,322 1066,314'
], T);
var leo = series([
    '8,98 16,97 25,108 60,117 85,132 125,132 136,122 145,132 155,138 165,158 185,168 210,170 230,178 245,192 262,192 272,202 283,190 300,200 320,202 342,196 360,210 390,222 400,214 410,222 450,204 460,208 470,204 488,218 497,212 508,222 518,238 530,232 547,238 560,222 580,218 598,236 606,216 615,234 632,228 645,240 655,216 665,238 700,232 712,230 725,240 735,250 745,246 772,250 782,240 803,250 815,236 850,214 860,184 880,160 890,145 900,146 908,132 932,122 960,144 970,116 980,108 990,112 1027,116 1037,138 1055,128 1075,136 1095,140 1110,136 1125,138 1135,154 1145,134 1154,128 1165,144 1180,132 1205,130 1214,414 1222,418 1233,402 1243,403 1253,424 1262,412 1282,360 1292,382 1302,370 1312,362 1322,334 1331,596 1341,302 1351,298 1362,308 1370,318 1382,302 1395,303 1415,294 1440,306 1450,286 1468,266 1480,264 1498,262 1515,244 1545,240 1568,228',
    '8,236 18,310 28,236 60,238 85,226 100,210 136,202 146,214 158,202 175,206 185,198 225,202 243,182 273,172 290,182 320,192 343,180 372,216 392,202 420,226 430,210 468,232 490,236 510,230 537,228 547,212 567,230 587,234 606,203 616,206 636,238 645,220 675,248 685,234 704,272 724,248 744,290 763,256 783,278 812,270 850,286 875,308 890,290 900,302 910,278 930,280 948,308 958,284 968,156 978,140 988,172 998,160 1018,162 1028,186 1048,164 1065,176 1087,204 1097,208 1116,186 1136,166 1155,184 1175,170 1190,192 1215,192 1235,186 1250,194 1273,190 1293,194 1312,170 1345,168 1360,174 1378,164 1467,155 1500,168 1518,166 1535,180 1550,196 1568,200',
    '20,206 30,198 40,206 65,192 80,170 105,170 120,176 130,168 145,178 175,172 185,152 200,164 225,182 243,156 270,150 290,142 315,137 345,142 380,180 400,208 410,192 430,202 440,234 450,214 460,236 479,208 488,252 507,256 518,272 528,266 545,272 556,266 567,248 580,242 606,229 630,238 645,278 655,248 680,244 700,238 714,240 724,314 745,300 763,350 775,326 783,290 802,290 812,320 822,298 841,346 851,290 870,322 892,322 915,290 930,288 940,308 950,282 975,272 988,260 998,264 1008,248 1030,250 1042,242 1055,246 1066,244'
], T);
var signal = series([
    '8,295 60,285 130,276 200,273 270,276 340,287 420,303 490,325 560,352 640,375 724,397 800,412 880,422 950,425 1020,423 1090,412 1160,400 1214,391 1280,388 1340,406 1400,430 1470,468 1560,508',
    '60,526 110,531 160,525 210,506 270,465 340,412 420,358 500,308 580,268 640,245 700,225 770,213 840,208 900,217 968,237 1060,262 1150,293 1230,328 1310,352 1390,366 1470,367 1560,352',
    '60,342 160,330 260,320 360,313 440,317 520,330 600,353 680,378 760,405 841,440 920,473 980,490 1020,498 1066,503'
], T, true);
var macd = series([
    '8,264 50,268 90,280 150,300 210,324 270,343 310,350 380,378 460,404 520,424 570,426 640,425 724,410 800,391 880,372 960,356 1040,343 1140,328 1205,328 1225,360 1260,430 1300,490 1350,545 1400,582 1450,606 1490,610 1530,597 1560,575',
    '50,532 90,490 140,410 180,340 220,270 265,190 300,180 340,186 430,190 510,217 630,242 700,290 783,343 840,393 890,442 955,438 1010,397 1070,366 1120,350 1180,322 1220,315 1280,298 1340,280 1440,270 1490,271 1530,290 1560,312',
    '20,332 130,333 160,340 240,343 320,354 400,373 500,387 560,398 640,394 700,415 724,426 780,460 841,486 900,505 950,506 1000,490 1066,460'
], T, true);

var alerts = [295.5, 627.5, 959.5, 1291.5, 1623.5];

put('macd', 2, 576,
    sessions(595, 775) +
    hist(macdHist, 689.5, 2, '#343434') +
    hline(600.5, '#f00') + hline(616.5, '#666600') + hline(633.5, '#0c0ccc', '3 4') + hline(650.5, '#666600') + hline(666.5, '#f00') +
    alerts.map(function (x) {
        return line([[x, 600], [x, 762]], '#006868', '18 6') + '<rect x="' + (x - 3.5) + '" y="768" width="7" height="6" fill="#fff"/>';
    }).join('') +
    line(signal, '#ff0') + line(macd, '#f00') + line(leo, '#0ff')
);

/* ---- CCI pane ---- */
var cci = series([
    '8,715 38,707 60,725 85,748 110,766 150,780 170,788 190,802 235,826 265,850 300,882 330,906 360,922 390,946 420,964 440,972 480,976 510,990 550,1006 600,1010 635,1022 724,1026 745,1038 800,1080 820,1096 850,1096 870,1080 890,1030 915,950 940,860 970,780 1000,705 1020,682 1038,673 1060,682 1100,718 1125,732 1150,752 1180,768 1195,776 1212,774 1225,910 1250,990 1280,1075 1320,1170 1361,1250 1375,1200 1400,1140 1440,1090 1480,1060 1520,1035 1560,1012',
    '40,990 90,984 160,960 235,942 260,925 280,905 320,898 360,889 370,893 380,910 408,930 440,990 470,1030 500,1070 515,1088 600,1086 620,1060 650,1056 700,1066 715,1085 745,1100 783,1135 810,1142 870,1148 890,1154 955,1152 968,1155 985,1094 1010,1050 1045,970 1075,910 1097,880 1115,867 1160,873 1190,880 1228,898 1280,892 1306,905 1340,890 1375,873 1420,840 1455,812 1490,808 1530,808 1550,820 1565,832',
    '30,880 60,915 78,922 110,912 145,896 180,858 210,816 245,812 280,796 330,757 365,748 388,748 410,785 432,808 460,880 490,940 510,1010 540,1082 570,1125 590,1140 665,1134 690,1106 712,1080 724,1075 735,1110 765,1142 790,1166 830,1168 870,1190 900,1160 935,1130 965,1122 1000,1098 1030,1074 1066,1050'
], T);
var stoc = series([
    '8,673 70,674 100,692 140,738 190,800 250,905 310,1000 350,1075 400,1230 415,1250 550,1252 600,1238 650,1230 720,1208 760,1200 800,1175 850,1150 890,1100 930,1020 965,915 990,800 1015,690 1040,674 1205,674 1214,800 1230,1100 1250,1250 1500,1252 1545,1235 1565,1217',
    '50,1165 100,1090 140,990 180,890 215,800 240,735 265,680 290,676 320,690 400,740 450,762 530,806 600,822 650,828 690,852 740,925 780,1010 805,1090 825,1215 845,1250 960,1252 985,1200 1010,1090 1050,970 1090,850 1125,710 1145,674 1485,674 1510,693 1540,740 1565,785',
    '20,850 45,888 85,898 145,888 155,895 205,930 250,968 280,998 320,990 350,1008 400,1056 450,1128 510,1220 540,1250 970,1252 1000,1240 1066,1192'
], T);
var v2 = series([
    '8,985 28,1012 48,1020 68,1085 85,1135 98,1142 106,1174 116,1150 138,1142 148,1122 155,1108 175,1096 210,1052 240,1004 253,1010 263,988 273,1010 300,1022 320,1048 335,1036 400,1030 440,994 480,1000 500,1024 520,1040 550,1050 570,1072 600,1080 640,1096 665,1088 690,1088 718,1062 740,1072 780,1050 825,1048 845,1022 875,996 905,942 920,938 930,918 958,930 970,950 1000,1010 1030,1080 1060,1198 1088,1242 1110,1230 1145,1160 1185,1050 1200,1020 1214,970 1230,1020 1243,1138 1255,1072 1300,1080 1350,1055 1370,1036 1380,945 1390,940 1400,675 1410,804 1425,802 1450,855 1458,848 1480,930 1510,1050 1535,1150 1547,1118 1557,1250 1566,1183',
    '28,1183 38,1156 48,1172 75,1130 105,1065 126,1048 136,1066 175,1070 205,1034 225,1012 250,1006 285,1020 305,1046 380,1066 430,1072 490,1056 520,1050 545,1022 600,995 625,988 640,1008 665,1022 690,1054 714,1100 745,1105 785,1118 812,1084 840,1050 880,1020 895,1036 910,1022 955,1018 980,1026 1010,972 1045,968 1075,990 1125,1050 1145,1124 1167,1176 1185,1192 1220,1178 1245,1122 1275,1048 1320,975 1380,970 1400,985 1440,1012 1465,1016 1500,1070 1540,1116 1566,1156',
    '24,1178 40,1158 58,1150 85,1080 120,990 160,900 182,886 215,925 240,1010 275,1092 300,1125 320,1132 350,1132 390,1080 430,1080 450,1096 470,1108 530,1106 560,1040 600,970 630,935 650,948 680,965 720,1000 735,1060 760,1130 790,1158 830,1132 870,1096 885,1085 890,1030 910,974 938,956 955,968 990,966 1030,1012 1066,1050'
], T);
var v2Red = series([
    '8,985 45,990 75,1020 105,1080 130,1125 155,1144 185,1138 215,1100 250,1045 280,1014 320,1016 370,1034 410,1032 450,1010 485,1000 520,1016 560,1040 600,1068 640,1084 690,1088 740,1074 800,1065 850,1050 890,1010 930,950 965,934 1000,950 1030,1010 1070,1120 1110,1205 1135,1223 1165,1200 1200,1100 1225,1040 1243,1026 1265,1050 1320,1082 1360,1074 1385,1050 1400,1000 1420,900 1450,825 1468,810 1485,840 1520,950 1560,1110',
    '30,1170 55,1185 85,1165 120,1110 150,1076 210,1060 260,1022 300,1018 350,1048 420,1066 500,1064 560,1040 620,1004 660,1002 690,1025 740,1090 780,1112 820,1106 860,1070 910,1036 960,1020 1010,1015 1070,972 1100,975 1135,1010 1175,1120 1210,1168 1240,1176 1270,1130 1310,1050 1350,995 1390,974 1440,988 1500,1025 1560,1100',
    '30,1155 60,1163 90,1145 130,1050 170,955 215,905 240,920 270,980 310,1080 350,1122 380,1125 420,1095 460,1084 550,1106 590,1060 630,990 665,947 705,952 750,1000 790,1090 830,1140 870,1130 910,1070 950,985 1000,966 1030,980 1066,1010'
], T, true);
var v2Blue = series([
    '8,985 45,987 75,1010 110,1070 140,1128 170,1142 205,1128 240,1080 275,1025 310,1013 350,1022 390,1034 440,1026 500,1002 540,1016 590,1050 640,1078 690,1086 760,1072 830,1060 880,1040 920,1000 960,945 990,937 1020,955 1060,1050 1110,1180 1145,1220 1175,1195 1220,1090 1250,1038 1275,1042 1330,1082 1380,1074 1405,1030 1440,890 1478,825 1510,870 1560,1020',
    '30,1140 60,1178 95,1168 130,1120 160,1078 230,1052 280,1020 320,1020 370,1050 430,1066 520,1064 580,1040 640,1004 685,1004 730,1050 770,1090 810,1108 850,1098 900,1046 950,1022 1000,1022 1040,1004 1070,978 1105,973 1145,1010 1185,1105 1220,1160 1245,1172 1275,1150 1320,1060 1360,1000 1400,976 1450,988 1510,1025 1560,1080',
    '35,1145 75,1160 110,1130 150,1040 190,950 225,910 255,930 290,1010 330,1095 370,1127 410,1115 450,1088 500,1090 550,1106 590,1078 640,990 680,950 720,955 760,1000 800,1085 840,1136 875,1136 920,1070 960,990 1000,966 1030,972 1066,998'
], T, true);

function spot(x, y, c) { return '<circle cx="' + x + '" cy="' + y + '" r="3" fill="' + c + '"/>'; }

put('cci', 2, 775,
    '<clipPath id="over"><rect x="0" y="770" width="1840" height="48"/></clipPath>' +
    '<clipPath id="under"><rect x="0" y="932" width="1840" height="60"/></clipPath>' +
    sessions(795, 988) +
    hist(cci, 874.5, 1, '#484848') +
    hline(817.5, '#808080') + hline(931.5, '#808080') + hline(920.5, '#008080') +
    line(stoc, '#cc6600', '4 3') + line(v2, '#008080') + line(v2Blue, '#1010ff') + line(v2Red, '#f00', '4 4') +
    line(cci, '#a8a8a8') +
    line(cci, '#f00', '', ' clip-path="url(#over)"') + line(cci, '#0ff', '', ' clip-path="url(#under)"') +
    spot(39.5, 802, '#0ff') + spot(495.5, 833, '#0ff') + spot(771, 801, '#0ff') + spot(1255.5, 801, '#0ff') +
    spot(247.5, 983, '#f00') + spot(631.5, 982, '#f00') + spot(1039.5, 974, '#f00') + spot(1691.5, 983, '#f00')
);

/* ---- scales ---- */
function tick(y, s) { return line([[1841, y + .5], [1847, y + .5]], '#fff') + (s ? text(1848, y + 8, s) : ''); }
function tag(y1, y2, color, base, s) {
    return '<rect x="1841" y="' + y1 + '" width="77" height="' + (y2 - y1) + '" fill="' + color + '"/>' + text(1849, base, s, 'tag');
}
function axis(a, b) { return line([[1840.5, a], [1840.5, b]], '#fff'); }

put('priceScale', 1840, 90,
    axis(90, 577) + line([[1840, 575.5], [1918, 575.5]], '#fff') +
    tick(123, '4300') + tick(201, '4250') + tick(279, '4200') + tick(357, '4150') + tick(435, '4100') + tick(513, '4050') +
    tag(341, 364, '#a6caf0', 360, '4154') + tag(465, 488, '#f00', 484, '4075') + tag(446, 469, '#a6caf0', 465, '4087') + tag(518, 541, '#6666ff', 537, '4041')
);
put('macdScale', 1840, 576,
    axis(576, 776) + line([[1840, 774.5], [1918, 774.5]], '#fff') +
    tick(695, '-15.00') + tick(716) + tick(736, '-25.00') + tick(757) +
    tag(657, 680, '#f00', 676, '-8.00') + tag(618, 642, '#1010ff', 641, '0.00') + tag(608, 630, '#666600', 626, '4.00') +
    tag(591, 614, '#f00', 609, '8.00') + tag(642, 665, '#0ff', 660, '-4.30')
);
put('cciScale', 1840, 775,
    axis(775, 989) +
    tick(803, '150.00') + tick(850, '50.00') + tick(874) + tick(898, '-50.00') + tick(945, '-150.00') + tick(969) +
    tag(808, 831, '#808080', 827, '120.00') +
    tag(922, 945, '#808080', 941, '-120.00') + tag(911, 934, '#a0a0a0', 930, '-96.81')
);

/* ---- time axis: a tick every 17 bars, long ones at the session breaks ---- */
var axisBody = line([[2, 989.5], [1918, 989.5]], '#fff');
['10:44', '11:52', '13:00', '14:08', '15:16', '16:24', '', '', '10:48', '11:56', '13:04', '14:12', '15:20', '16:28', '', '', '10:52', '12:00', '13:08', '14:16', '15:24', '16:32', '', '', '10:56', '12:04', ''].forEach(function (s, i) {
    var x = 55.5 + i * 17 * BAR;
    axisBody += line([[x, 989], [x, 994]], '#fff') + (s ? text(x + 1.5, 1013, s) : '');
});
['11/26', '11/29', '11/30'].forEach(function (s, i) {
    axisBody += line([[breaks[i], 989], [breaks[i], 1000]], '#fff') + text(breaks[i] + 1.5, 1013, s);
});
put('times', 2, 988, axisBody);
```
